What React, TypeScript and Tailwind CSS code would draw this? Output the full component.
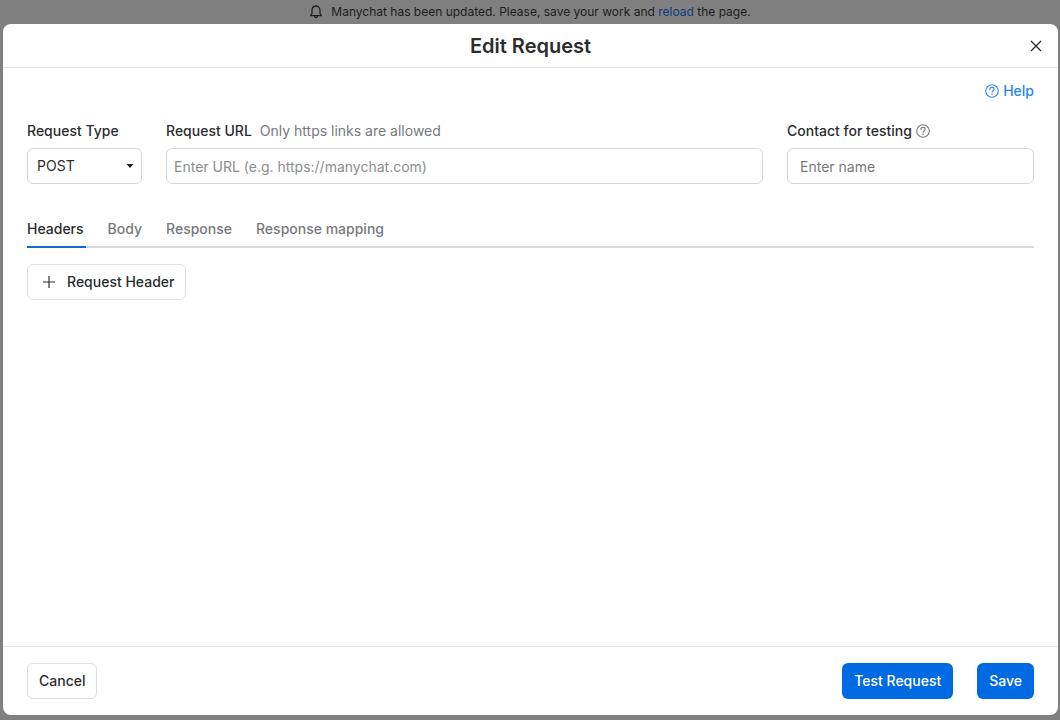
import { useState } from "react";
import clsx from "clsx";

const tabs = ["Headers", "Body", "Response", "Response mapping"];

const QuestionIcon = ({ className }: { className?: string }) => (
  <svg viewBox="0 0 14 14" fill="none" stroke="currentColor" className={className} aria-hidden="true">
    <circle cx="7" cy="7" r="6.3" strokeWidth="1.1" />
    <path
      d="M4.9 5.4C4.9 4.2 5.8 3.4 7 3.4s2.1.8 2.1 1.9c0 1.5-2 1.5-2 3"
      strokeWidth="1.1"
      strokeLinecap="round"
    />
    <circle cx="7.1" cy="10.3" r="0.7" fill="currentColor" stroke="none" />
  </svg>
);

const UpdateBanner = () => (
  <div className="flex h-6 items-center justify-center gap-2 text-xs text-[#1c1d1e]">
    <svg viewBox="0 0 14 16" fill="none" stroke="currentColor" className="h-4 w-3.5" aria-hidden="true">
      <path
        d="M1.6 11.6h10.8L11 9.4V6C11 3.7 9.3 2.2 7 2.2S3 3.7 3 6v3.4z"
        strokeWidth="1.2"
        strokeLinejoin="round"
      />
      <path d="M5.6 12c0 1.1.6 1.7 1.4 1.7s1.4-.6 1.4-1.7M7 1v1.2" strokeWidth="1.2" />
    </svg>
    <p>
      Manychat has been updated. Please, save your work and{" "}
      <a href="#reload" className="text-[#0b3f7d]">
        reload
      </a>{" "}
      the page.
    </p>
  </div>
);

const App = () => {
  const [activeTab, setActiveTab] = useState("Headers");

  return (
    <div className="flex min-h-screen flex-col bg-[#808080] font-['Inter','Liberation_Sans',sans-serif] text-sm text-[#2c2d2e]">
      <UpdateBanner />

      <div
        role="dialog"
        aria-labelledby="dialog-title"
        className="mr-0.5 mb-[5px] ml-[3px] flex flex-1 flex-col rounded-lg bg-white"
      >
        <header className="flex h-11 items-center border-b border-[#e3e4e5] px-3">
          <span className="w-5" />
          <h1 id="dialog-title" className="flex-1 text-center text-xl font-semibold">
            Edit Request
          </h1>
          <button type="button" aria-label="Close" className="flex size-5 items-center justify-center">
            <svg viewBox="0 0 12 12" fill="none" stroke="currentColor" className="size-3" aria-hidden="true">
              <path d="M1 1l10 10M11 1L1 11" strokeWidth="1.4" />
            </svg>
          </button>
        </header>

        <main className="flex-1 px-6 pt-[13px]">
          <div className="flex justify-end">
            <a href="#help" className="flex items-center gap-1 font-medium text-[#2a87e8]">
              <QuestionIcon className="size-3.5" />
              Help
            </a>
          </div>

          <div className="mt-5 flex gap-6">
            <div className="w-[115px]">
              <label htmlFor="request-type" className="font-medium">
                Request Type
              </label>
              <div className="relative mt-[7px]">
                <select
                  id="request-type"
                  defaultValue="POST"
                  className="h-9 w-full appearance-none rounded-md border border-[#d5d6d8] bg-white px-[9px]"
                >
                  <option>GET</option>
                  <option>POST</option>
                  <option>PUT</option>
                  <option>DELETE</option>
                </select>
                <svg
                  viewBox="0 0 8 4"
                  className="pointer-events-none absolute top-4 right-2 h-1 w-2"
                  aria-hidden="true"
                >
                  <path d="M0.5 0h7L4 4z" fill="#1c1d1e" />
                </svg>
              </div>
            </div>

            <div className="flex-1">
              <div className="flex gap-2">
                <label htmlFor="request-url" className="font-medium">
                  Request URL
                </label>
                <span className="text-[#77797c]">Only https links are allowed</span>
              </div>
              <input
                id="request-url"
                type="text"
                placeholder="Enter URL (e.g. https://manychat.com)"
                className="mt-[7px] h-9 w-full rounded-md border border-[#d5d6d8] px-[7px] placeholder:text-[#8b8d90]"
              />
            </div>

            <div className="w-[247px]">
              <div className="flex items-center gap-1">
                <label htmlFor="contact" className="font-medium">
                  Contact for testing
                </label>
                <QuestionIcon className="size-3.5 text-[#77797c]" />
              </div>
              <input
                id="contact"
                type="text"
                placeholder="Enter name"
                className="mt-[7px] h-9 w-full rounded-md border border-[#d5d6d8] px-3 placeholder:text-[#77797c]"
              />
            </div>
          </div>

          <div role="tablist" className="mt-[35px] flex gap-[22px] border-b-2 border-[#d8d9da]">
            {tabs.map((tab) => (
              <button
                key={tab}
                type="button"
                role="tab"
                aria-selected={tab === activeTab}
                onClick={() => setActiveTab(tab)}
                className={clsx(
                  "-mb-0.5 border-b-2 pr-0.5 pb-[7px] font-medium",
                  tab === activeTab ? "border-[#0f6fd0]" : "border-transparent text-[#77797c]",
                )}
              >
                {tab}
              </button>
            ))}
          </div>

          <button
            type="button"
            className="mt-4 flex h-9 items-center gap-3 rounded-md border border-[#dfe0e2] pr-[11px] pl-[15px] font-medium"
          >
            <svg viewBox="0 0 12 12" fill="none" stroke="currentColor" className="size-3" aria-hidden="true">
              <path d="M6 0v12M0 6h12" strokeWidth="1.2" />
            </svg>
            Request Header
          </button>
        </main>

        <footer className="flex items-center gap-6 border-t border-[#e3e4e5] px-6 py-4 font-medium">
          <button type="button" className="mr-auto h-9 rounded-md border border-[#dfe0e2] px-[11px]">
            Cancel
          </button>
          <button type="button" className="h-9 rounded-md bg-[#006ae3] px-3 text-white">
            Test Request
          </button>
          <button type="button" className="h-9 rounded-md bg-[#006ae3] px-3 text-white">
            Save
          </button>
        </footer>
      </div>
    </div>
  );
};

export default App;
